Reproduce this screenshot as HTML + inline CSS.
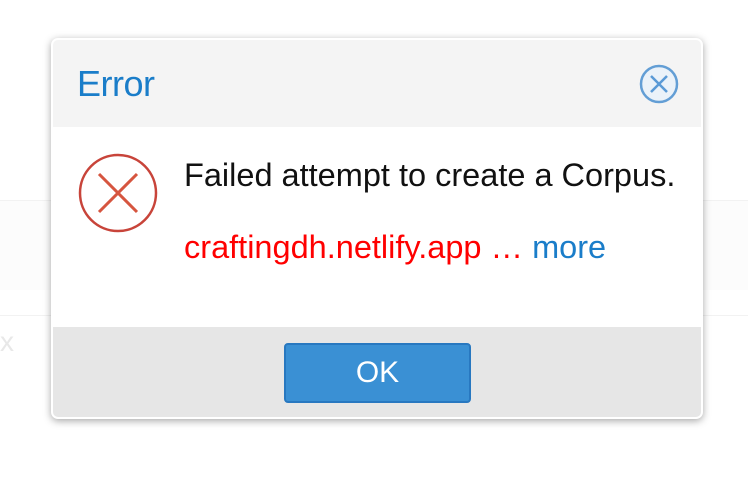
<!DOCTYPE html>
<html><head><style>
body{margin:0;width:748px;height:497px;background:#fff;position:relative;overflow:hidden;font-family:"Liberation Sans",Arial,sans-serif}
.bg1{position:absolute;left:0;right:0;top:200px;height:89px;background:#fcfcfc;border-top:1px solid #f2f2f2}
.bg2{position:absolute;left:0;right:0;top:315px;height:1px;background:#f2f2f2}
.bx{position:absolute;left:0;top:326px;font-size:28px;color:#e8e8e8}
.dlg{position:absolute;left:51px;top:38px;width:648px;height:377px;background:#fff;border:2px solid #fff;border-radius:7px;box-shadow:0 2px 8px rgba(0,0,0,.35);overflow:hidden}
.hd{position:absolute;left:0;top:0;right:0;height:87px;background:#f4f4f4}
.hd span{position:absolute;left:24px;top:23px;font-size:36px;color:#1a7dc9;letter-spacing:-0.5px}
.ft{position:absolute;left:0;right:0;top:287px;bottom:0;background:#e6e6e6}
.ok{position:absolute;left:231px;top:16px;width:183px;height:56px;background:#3a90d4;border:2px solid #2878c0;border-radius:4px;color:#fff;font-size:30px;text-align:center;line-height:56px}
.t1{position:absolute;left:131px;top:117px;font-size:32.5px;color:#111}
.t2{position:absolute;left:131px;top:189px;font-size:32.5px;color:#f00}
.t2 b{font-weight:normal;color:#1a7dc9}
</style></head><body>
<div class="bg1"></div><div class="bg2"></div><div class="bx">x</div>
<div class="dlg">
<div class="hd"><span>Error</span>
<svg style="position:absolute;left:585px;top:24px" width="42" height="42" viewBox="0 0 42 42"><circle cx="21" cy="20" r="18" fill="#eaf2fa" stroke="#4a90d0" stroke-width="2.5" opacity=".85"/><path d="M13 12L29 28M29 12L13 28" stroke="#5a9ad6" stroke-width="2.5"/></svg>
</div>
<svg style="position:absolute;left:24px;top:112px" width="84" height="84" viewBox="0 0 84 84"><circle cx="41" cy="41" r="38" fill="#fff" stroke="#c8443a" stroke-width="2.5"/><path d="M22 22L60 60M60 22L22 60" stroke="#d6553f" stroke-width="3"/></svg>
<div class="t1">Failed attempt to create a Corpus.</div>
<div class="t2">craftingdh.netlify.app … <b>more</b></div>
<div class="ft"><div class="ok">OK</div></div>
</div>
</body></html>
